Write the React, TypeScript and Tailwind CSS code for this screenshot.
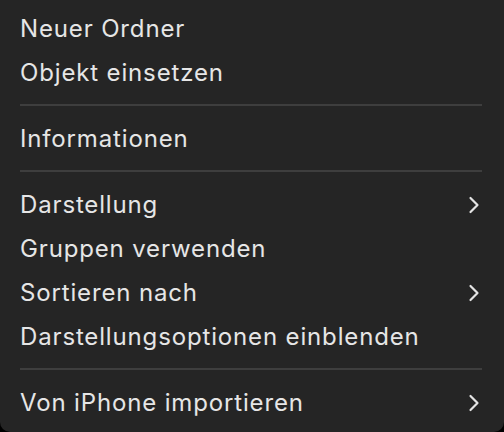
import React from 'react';

type Entry = { label: string; submenu?: boolean } | 'sep';

const entries: Entry[] = [
  { label: 'Neuer Ordner' },
  { label: 'Objekt einsetzen' },
  'sep',
  { label: 'Informationen' },
  'sep',
  { label: 'Darstellung', submenu: true },
  { label: 'Gruppen verwenden' },
  { label: 'Sortieren nach', submenu: true },
  { label: 'Darstellungsoptionen einblenden' },
  'sep',
  { label: 'Von iPhone importieren', submenu: true },
];

const Chevron = () => (
  <svg width="12" height="20" viewBox="0 0 12 20" fill="none">
    <path d="M2.5 3 L9.5 10 L2.5 17" stroke="#e4e4e4" strokeWidth="2.2" strokeLinecap="round" strokeLinejoin="round" />
  </svg>
);

const App = () => {
  return (
    <div className="w-[504px] h-[432px] bg-black">
      <div
        className="h-full bg-[#252525] rounded-b-[10px] pt-[7px] text-[#e6e6e6]"
        style={{ fontFamily: 'Inter, "Noto Sans", sans-serif' }}
      >
        {entries.map((e, i) =>
          e === 'sep' ? (
            <div key={i} className="h-[22px] pt-[9px] pl-5 pr-[22px]">
              <div className="h-[2px] bg-[#3e3e3e]" />
            </div>
          ) : (
            <div key={i} className="h-[44px] flex items-center justify-between pl-5 pr-[24px]">
              <span className="text-[24px] leading-none tracking-[0.85px]">{e.label}</span>
              {e.submenu && <Chevron />}
            </div>
          )
        )}
      </div>
    </div>
  );
};

export default App;
